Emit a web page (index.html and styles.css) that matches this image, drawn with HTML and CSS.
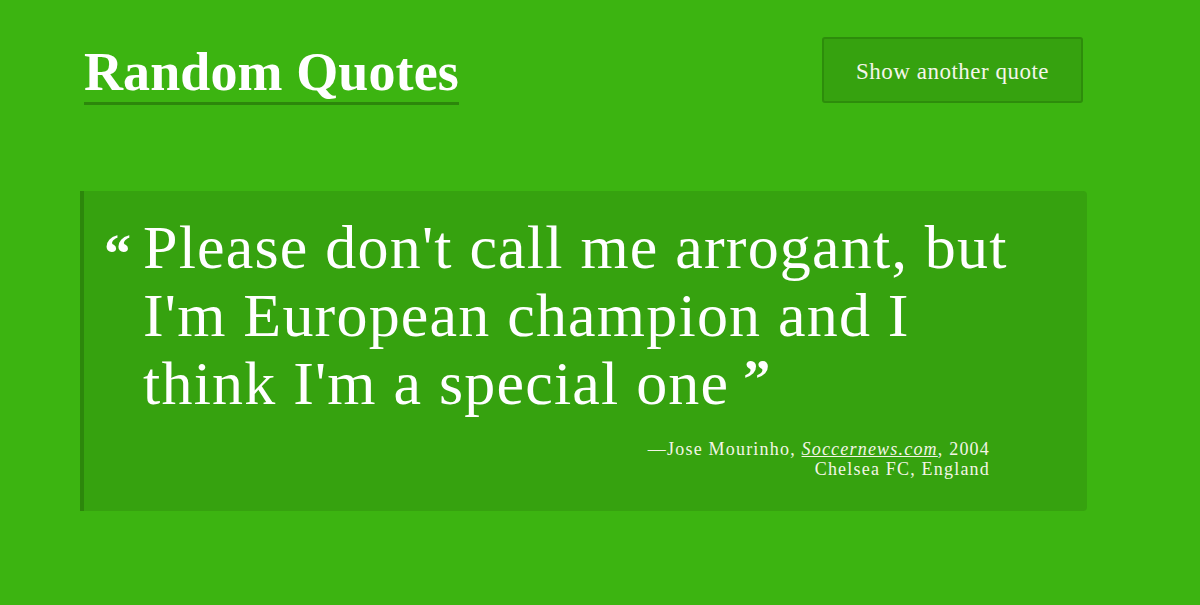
FILE: index.html
```html
<!DOCTYPE html>
<html lang="en">
<head>
<meta charset="utf-8">
<title>Random Quotes</title>
<link rel="stylesheet" href="styles.css">
</head>
<body>
<div class="page">
  <header class="header">
    <h1 class="title">Random Quotes</h1>
    <button class="btn" type="button">Show another quote</button>
  </header>
  <blockquote class="quote">
    <div class="quote-body">
      <span class="mark open">“</span>
      <p class="quote-text">Please don't call me arrogant, but I'm European champion and I think I'm a special one</p>
    </div>
    <div class="cite">
      <div>—Jose Mourinho, <a class="src" href="#">Soccernews.com</a>, 2004</div>
      <div>Chelsea FC, England</div>
    </div>
  </blockquote>
</div>
</body>
</html>
```
FILE: styles.css
```css
html, body {
  margin: 0;
  padding: 0;
  background: #3cb411;
  height: 100%;
}
body {
  font-family: "Liberation Serif", "DejaVu Serif", serif;
  color: #fff;
}
.page {
  width: 1007px;
  margin-left: 80px;
  padding-top: 37px;
}
.header {
  display: flex;
  justify-content: space-between;
  align-items: flex-start;
  padding-left: 4px;
  padding-right: 4px;
}
.title {
  margin: 6px 0 0;
  font-size: 54px;
  font-weight: 700;
  line-height: 58px;
  border-bottom: 3px solid #2c870b;
  padding-bottom: 1px;
  letter-spacing: 0.1px;
}
.btn {
  width: 261px;
  height: 66px;
  background: #36a20f;
  border: 2px solid #2d8d0b;
  border-radius: 3px;
  color: #f4f6ea;
  font-family: inherit;
  font-size: 23px;
  letter-spacing: 0.5px;
  padding: 4px 0 0;
}
.quote {
  margin: 86px 0 0;
  background: #36a20f;
  border-left: 4px solid #2c870b;
  border-radius: 0 4px 4px 0;
  padding: 22px 57px 32px 20px;
}
.quote-body {
  display: flex;
}
.mark {
  font-weight: 700;
  font-size: 54px;
  line-height: 1;
}
.open {
  width: 39px;
  flex: none;
  padding-top: 14px;
}
.quote-text {
  margin: 0;
  font-size: 62px;
  line-height: 68px;
  letter-spacing: 1.2px;
}
.quote-text::after {
  content: "”";
  display: inline-block;
  vertical-align: top;
  margin-left: 14px;
  position: relative;
  top: 10px;
  font-weight: 700;
  font-size: 54px;
  letter-spacing: 0;
  line-height: 40px;
}
.cite {
  margin-top: 22px;
  margin-right: 40px;
  text-align: right;
  font-size: 18px;
  line-height: 20px;
  letter-spacing: 1.2px;
  color: #f3f5e6;
}
.src {
  color: inherit;
  font-style: italic;
}
```
